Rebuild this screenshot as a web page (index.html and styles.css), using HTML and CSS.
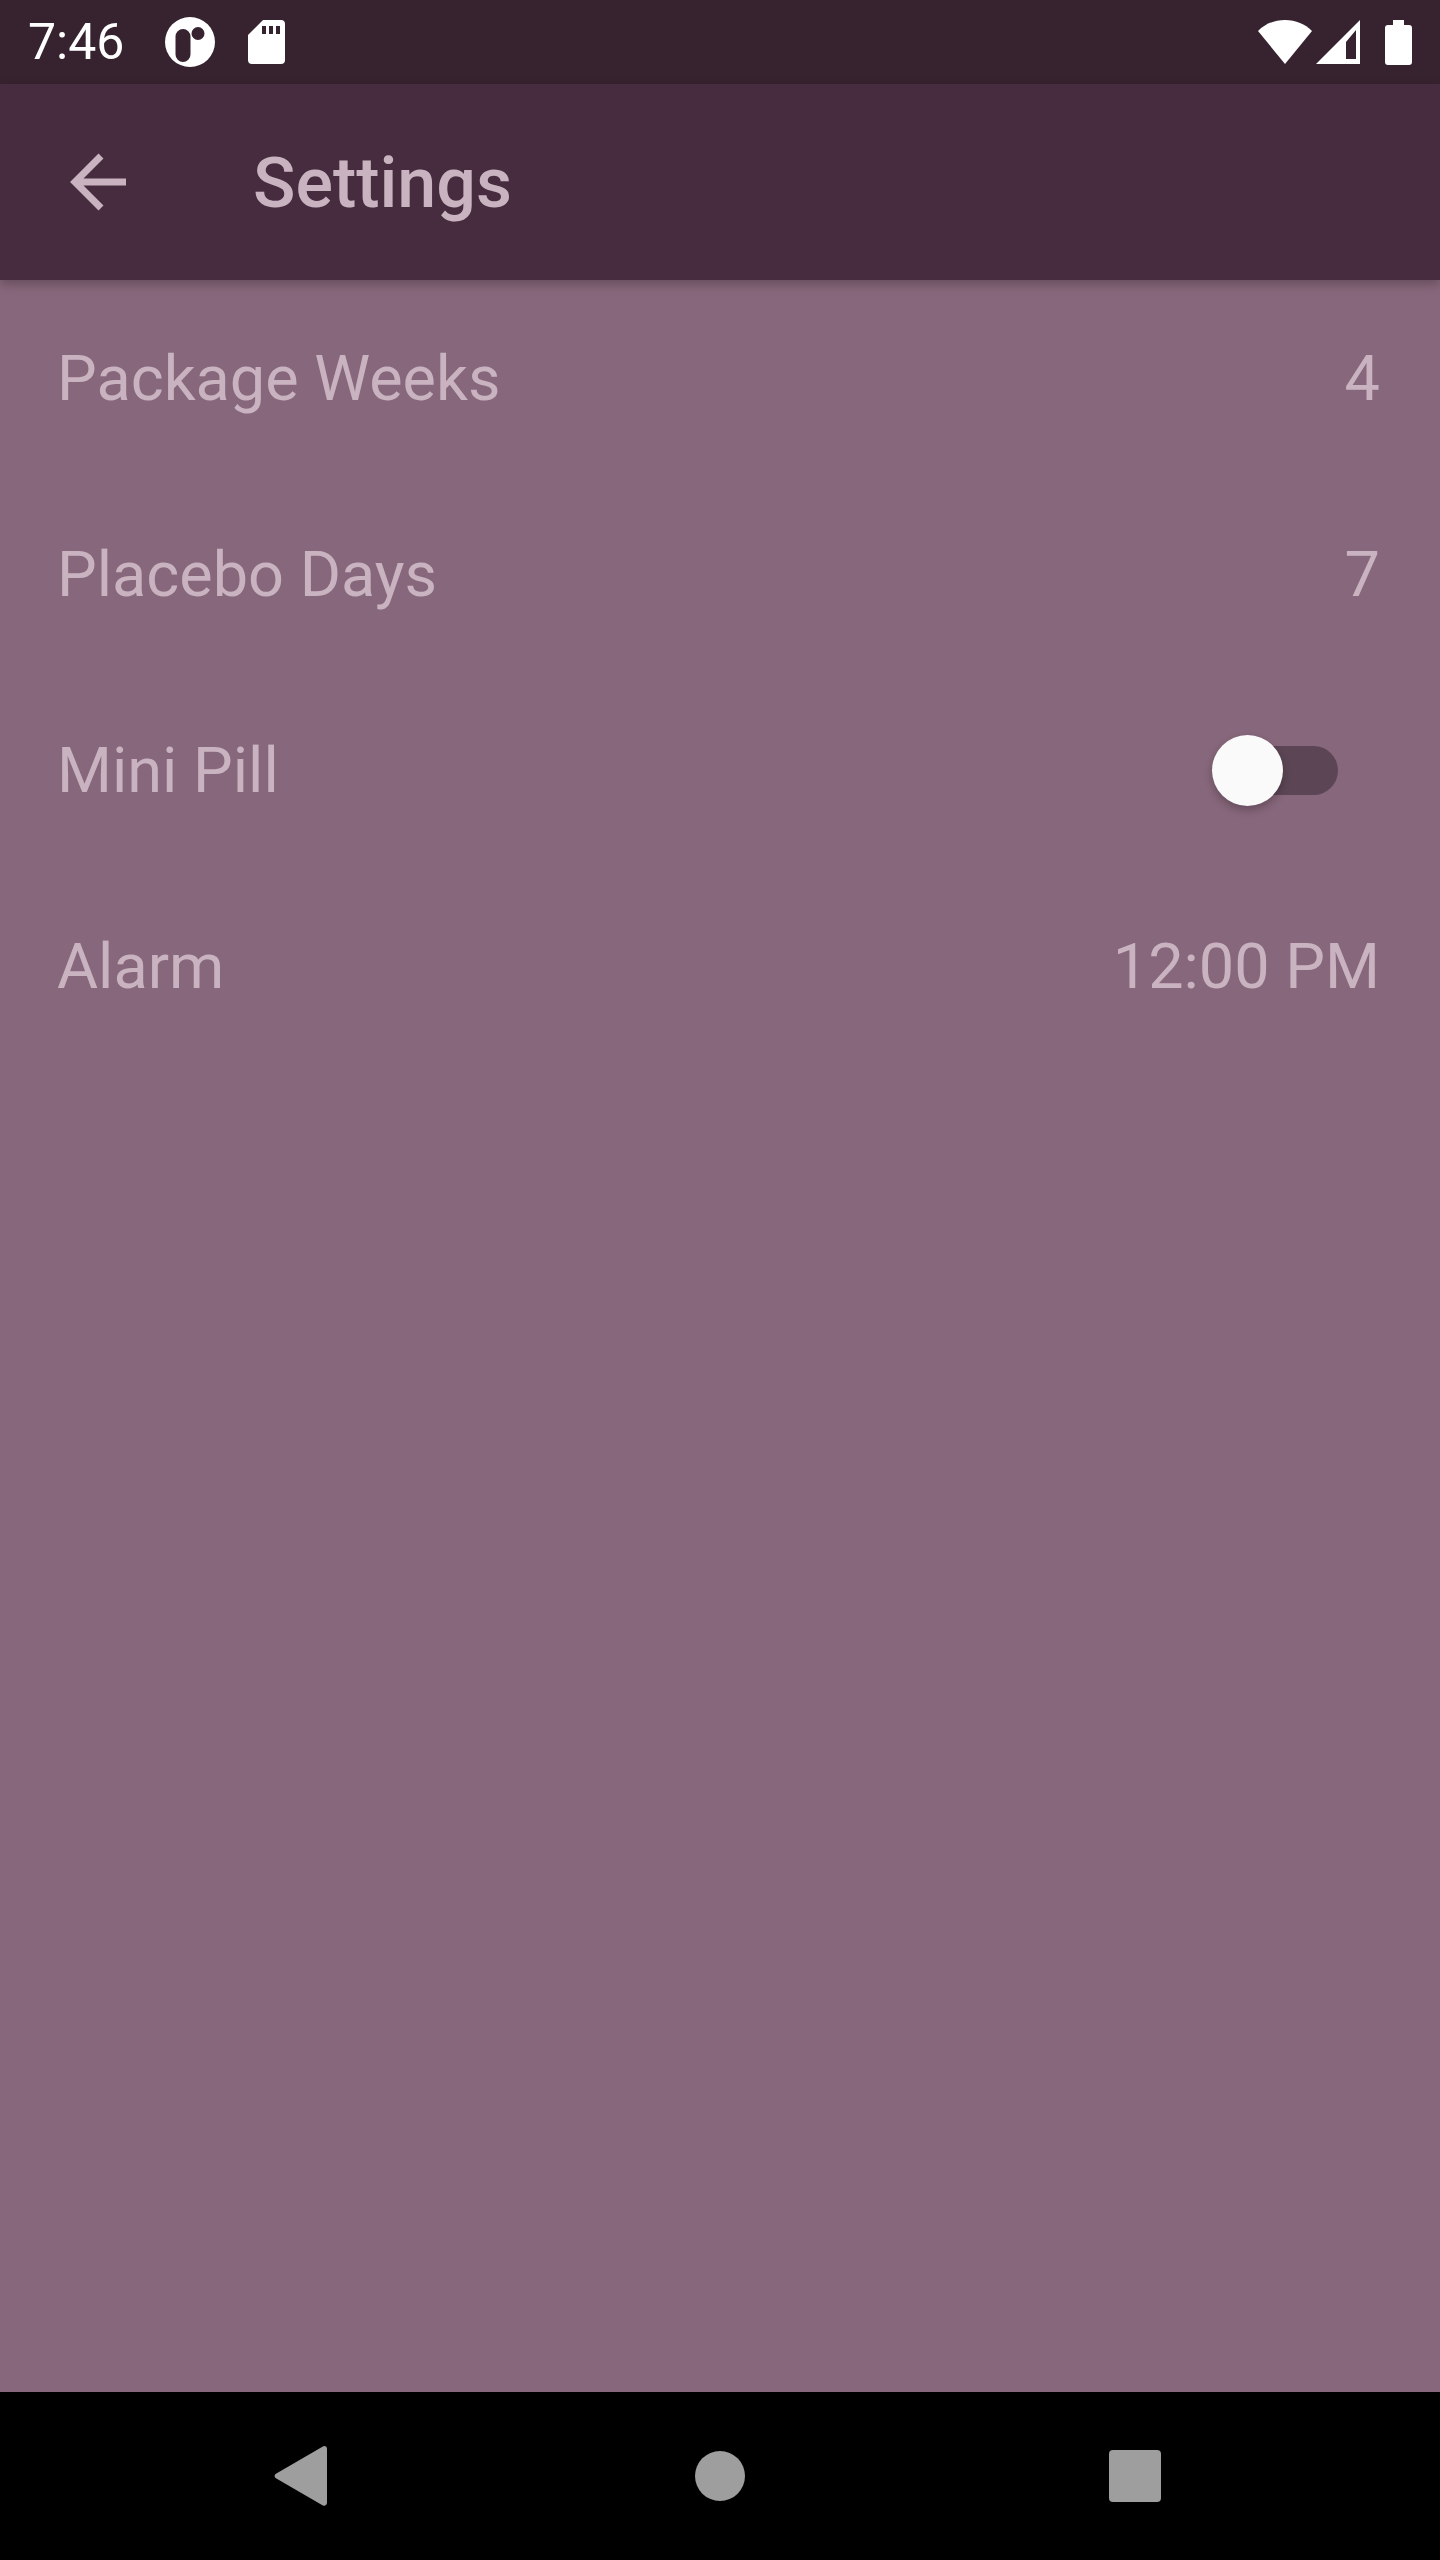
FILE: index.html
```html
<!DOCTYPE html>
<html lang="en">
<head>
  <meta charset="UTF-8">
  <meta name="viewport" content="width=device-width, initial-scale=1.0">
  <title>Settings</title>
  <link rel="stylesheet" href="styles.css">
</head>
<body>

  <!-- Status Bar -->
  <div class="status-bar">
    <span class="status-time">7:46</span>
    <svg class="icon-app" width="50" height="50" viewBox="0 0 50 50">
      <path fill="#fff" fill-rule="evenodd" d="M25 0a25 25 0 1 0 0 50a25 25 0 1 0 0-50zM18 12a7.500 7.500 0 0 1 7.500 7.500v18a7.500 7.500 0 0 1-15 0v-18a7.500 7.500 0 0 1 7.500-7.500zM33 10a6.500 6.500 0 1 1 0 13a6.500 6.500 0 1 1 0-13z"/>
    </svg>
    <svg class="icon-sd" width="37" height="44" viewBox="0 0 37 44">
      <path fill="#fff" fill-rule="evenodd" d="M15 0H33a4 4 0 0 1 4 4V40a4 4 0 0 1-4 4H4a4 4 0 0 1-4-4V15zM14 6v8h4V6zM21 6v8h4V6zM28 6v8h4V6z"/>
    </svg>
    <div class="status-right">
      <svg width="54" height="44" viewBox="0 0 54 44">
        <path fill="#fff" d="M0 11C7 4 16 0 27 0s20 4 27 11L27 44z"/>
      </svg>
      <svg width="44" height="44" viewBox="0 0 44 44">
        <path fill="#fff" fill-rule="evenodd" d="M44 0V44H0zM40 10L30 22V39H40z"/>
      </svg>
      <svg class="icon-battery" width="27" height="45" viewBox="0 0 27 45">
        <path fill="#fff" d="M8 0H19V5H24a3 3 0 0 1 3 3V42a3 3 0 0 1-3 3H3a3 3 0 0 1-3-3V8a3 3 0 0 1 3-3H8z"/>
      </svg>
    </div>
  </div>

  <!-- App Bar -->
  <div class="app-bar">
    <svg class="icon-back" width="58" height="58" viewBox="0 0 58 58">
      <path fill="none" stroke="#c9b3c0" stroke-width="7" d="M56 29H6M31 3L5 29L31 55"/>
    </svg>
    <span class="app-title">Settings</span>
  </div>

  <!-- Settings List -->
  <div class="settings">
    <div class="row"><span>Package Weeks</span><span>4</span></div>
    <div class="row"><span>Placebo Days</span><span>7</span></div>
    <div class="row">
      <span>Mini Pill</span>
      <div class="switch"><div class="thumb"></div></div>
    </div>
    <div class="row"><span>Alarm</span><span>12:00 PM</span></div>
  </div>

  <!-- Navigation Bar -->
  <div class="nav-bar">
    <svg width="53" height="60" viewBox="0 0 53 60">
      <path fill="#9e9e9e" d="M50 0a3 3 0 0 1 3 3V57a3 3 0 0 1-5 2L1.500 32a3 3 0 0 1 0-4L48 1z"/>
    </svg>
    <div class="nav-circle"></div>
    <div class="nav-square"></div>
  </div>

</body>
</html>
```

FILE: styles.css
```css
/* General Page Styling */
html, body {
  margin: 0;
  padding: 0;
}

body {
  width: 1440px;
  height: 2560px;
  display: flex;
  flex-direction: column;
  background-color: #87677b;
  font-family: 'Roboto', sans-serif;
  color: #c9b3c0;
}

/* Status Bar */
.status-bar {
  height: 84px;
  flex: none;
  display: flex;
  align-items: center;
  padding: 0 28px;
  background-color: #36232f;
  color: #fff;
}

.status-time {
  font-size: 50px;
  margin-right: 41px;
}

.icon-sd {
  margin-left: 33px;
}

.status-right {
  margin-left: auto;
  display: flex;
  align-items: center;
  gap: 4px;
}

.icon-battery {
  margin-left: 21px;
}

/* App Bar */
.app-bar {
  height: 196px;
  flex: none;
  display: flex;
  align-items: center;
  padding-left: 70px;
  background-color: #472c3f;
  box-shadow: 0 4px 10px rgba(0, 0, 0, 0.25);
  position: relative;
}

.app-title {
  font-size: 70px;
  font-weight: 500;
  margin: 2px 0 0 125px;
}

/* Settings List */
.settings {
  flex: 1;
  padding: 0 60px 0 57px;
}

.row {
  height: 196px;
  display: flex;
  justify-content: space-between;
  align-items: center;
  font-size: 63px;
}

/* Switch */
.switch {
  position: relative;
  width: 119px;
  height: 49px;
  margin-right: 42px;
  border-radius: 25px;
  background-color: #5c4655;
}

.thumb {
  position: absolute;
  left: -7px;
  top: -11px;
  width: 71px;
  height: 71px;
  border-radius: 50%;
  background-color: #fafafa;
  box-shadow: 0 4px 8px rgba(0, 0, 0, 0.25);
}

/* Navigation Bar */
.nav-bar {
  height: 168px;
  flex: none;
  display: flex;
  align-items: center;
  justify-content: space-between;
  padding: 0 279px 0 274px;
  background-color: #000;
}

.nav-circle {
  width: 50px;
  height: 50px;
  margin-left: 3px;
  border-radius: 50%;
  background-color: #9e9e9e;
}

.nav-square {
  width: 52px;
  height: 52px;
  border-radius: 4px;
  background-color: #9e9e9e;
}
```
